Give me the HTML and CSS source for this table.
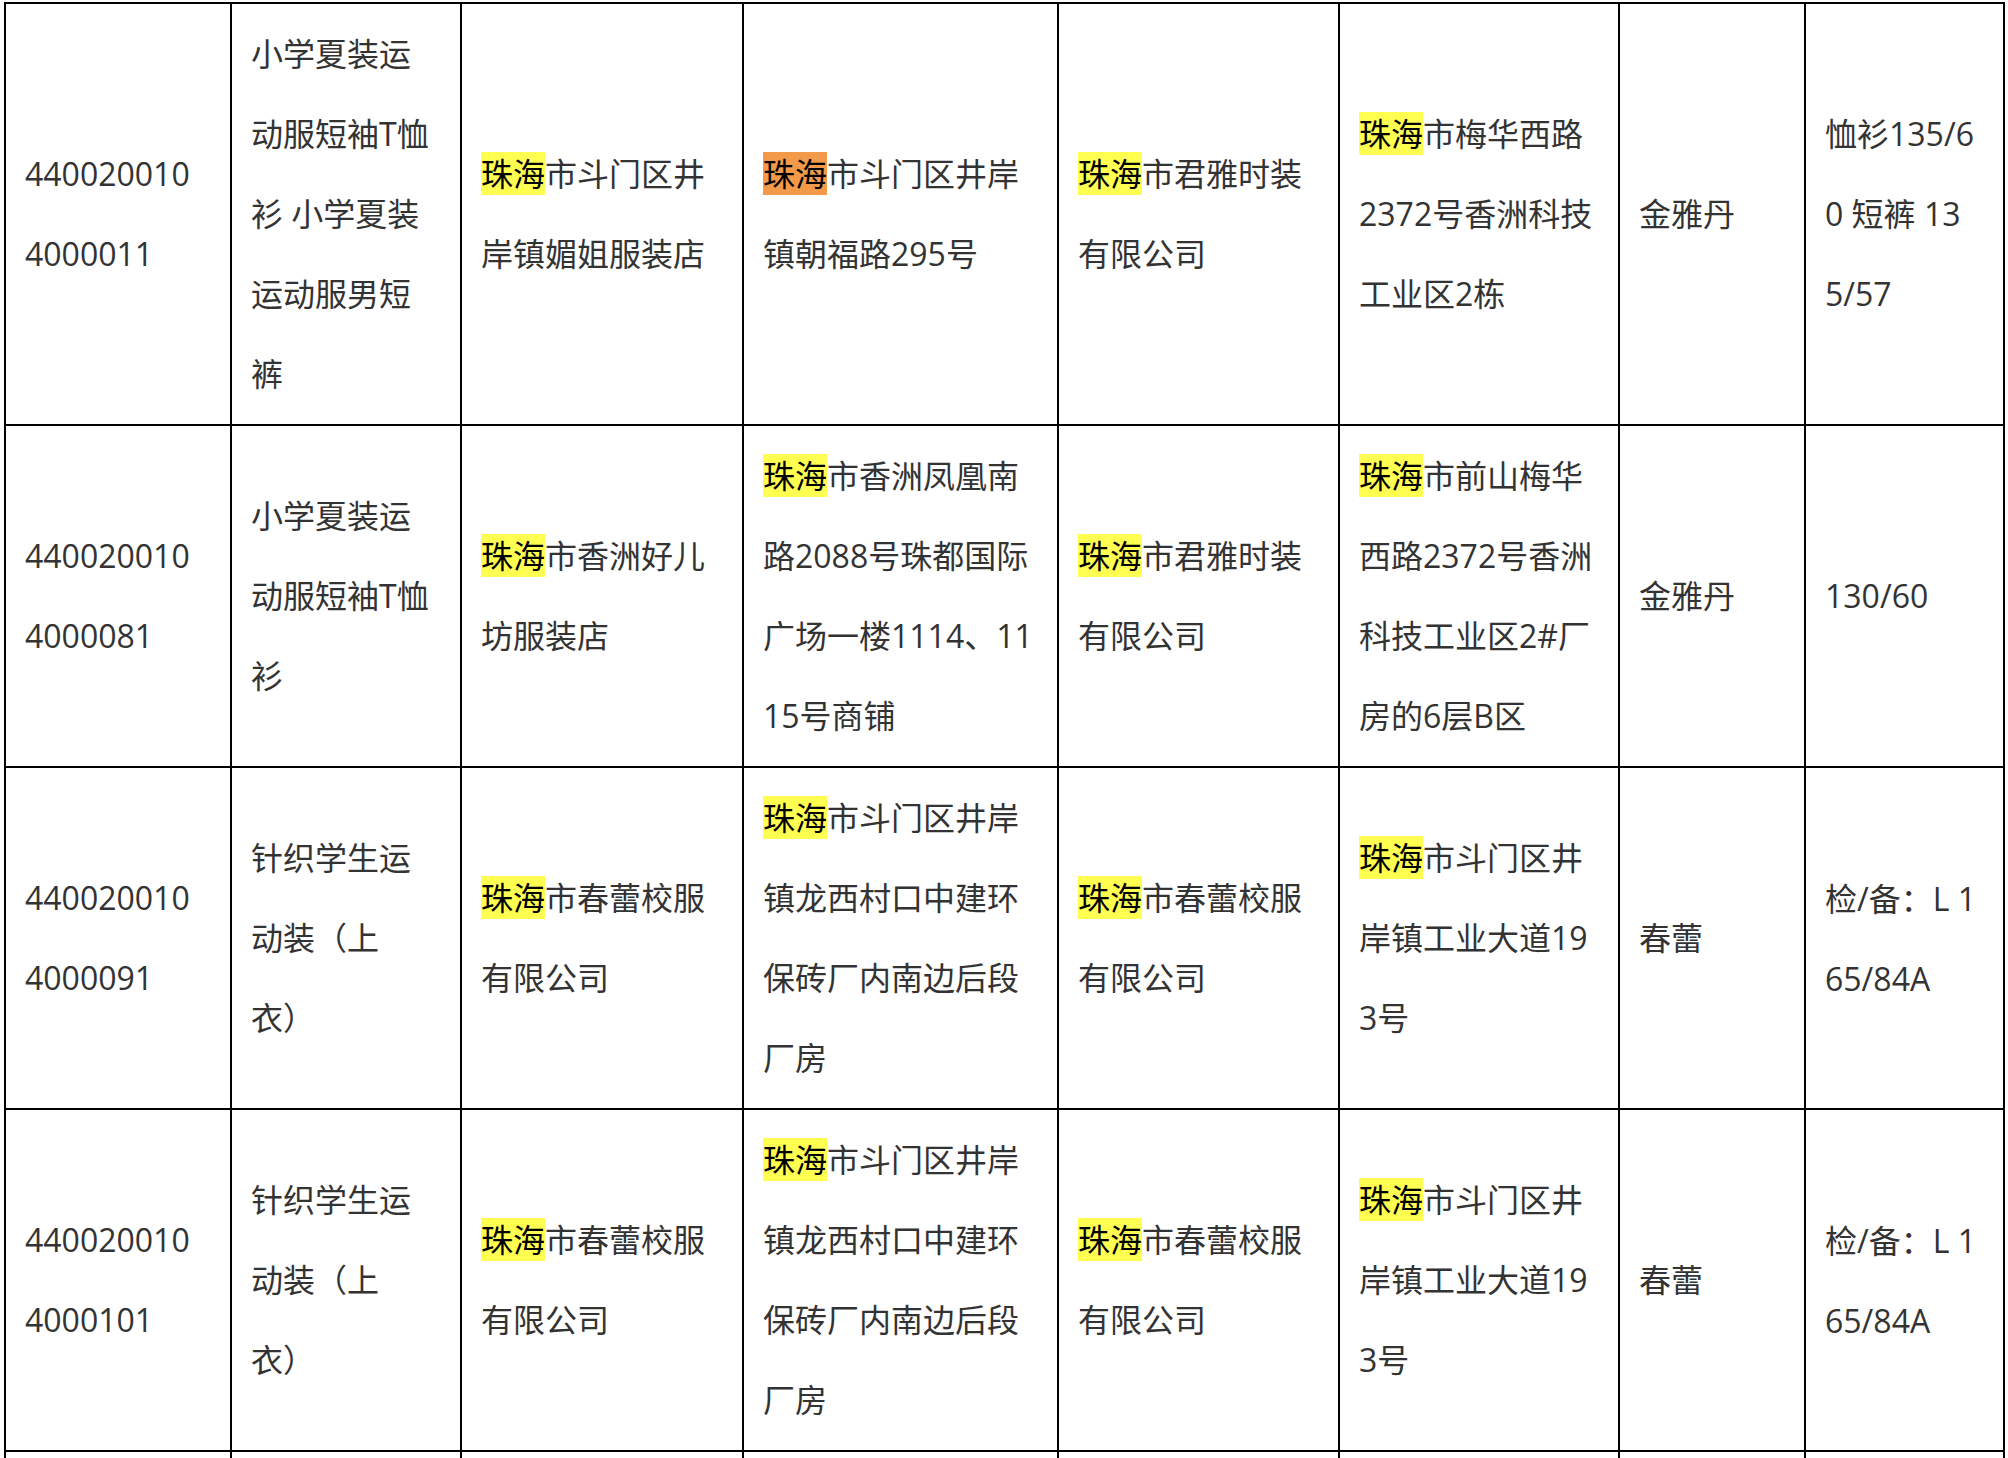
FILE: index.html
```html
<!DOCTYPE html>
<html lang="zh-CN">
<head>
<meta charset="utf-8">
<title>抽检结果</title>
<link rel="stylesheet" href="styles.css">
</head>
<body>
<table class="results">
  <tbody>
    <tr>
      <td class="c1">4400200104000011</td>
      <td class="c2">小学夏装运动服短袖T恤衫 小学夏装运动服男短裤</td>
      <td class="c3"><mark class="hl">珠海</mark>市斗门区井岸镇媚姐服装店</td>
      <td class="c4"><mark class="hl hl-current">珠海</mark>市斗门区井岸镇朝福路295号</td>
      <td class="c5"><mark class="hl">珠海</mark>市君雅时装有限公司</td>
      <td class="c6"><mark class="hl">珠海</mark>市梅华西路2372号香洲科技工业区2栋</td>
      <td class="c7">金雅丹</td>
      <td class="c8">恤衫135/60 短裤 135/57</td>
    </tr>
    <tr>
      <td class="c1">4400200104000081</td>
      <td class="c2">小学夏装运动服短袖T恤衫</td>
      <td class="c3"><mark class="hl">珠海</mark>市香洲好儿坊服装店</td>
      <td class="c4"><mark class="hl">珠海</mark>市香洲凤凰南路2088号珠都国际广场一楼1114、1115号商铺</td>
      <td class="c5"><mark class="hl">珠海</mark>市君雅时装有限公司</td>
      <td class="c6"><mark class="hl">珠海</mark>市前山梅华西路2372号香洲科技工业区2#厂房的6层B区</td>
      <td class="c7">金雅丹</td>
      <td class="c8">130/60</td>
    </tr>
    <tr>
      <td class="c1">4400200104000091</td>
      <td class="c2">针织学生运动装（上衣）</td>
      <td class="c3"><mark class="hl">珠海</mark>市春蕾校服有限公司</td>
      <td class="c4"><mark class="hl">珠海</mark>市斗门区井岸镇龙西村口中建环保砖厂内南边后段厂房</td>
      <td class="c5"><mark class="hl">珠海</mark>市春蕾校服有限公司</td>
      <td class="c6"><mark class="hl">珠海</mark>市斗门区井岸镇工业大道193号</td>
      <td class="c7">春蕾</td>
      <td class="c8">检/备<span class="punct">：</span>L 165/84A</td>
    </tr>
    <tr>
      <td class="c1">4400200104000101</td>
      <td class="c2">针织学生运动装（上衣）</td>
      <td class="c3"><mark class="hl">珠海</mark>市春蕾校服有限公司</td>
      <td class="c4"><mark class="hl">珠海</mark>市斗门区井岸镇龙西村口中建环保砖厂内南边后段厂房</td>
      <td class="c5"><mark class="hl">珠海</mark>市春蕾校服有限公司</td>
      <td class="c6"><mark class="hl">珠海</mark>市斗门区井岸镇工业大道193号</td>
      <td class="c7">春蕾</td>
      <td class="c8">检/备<span class="punct">：</span>L 165/84A</td>
    </tr>
    <tr class="row-next">
      <td class="c1"></td>
      <td class="c2"></td>
      <td class="c3"></td>
      <td class="c4"></td>
      <td class="c5"></td>
      <td class="c6"></td>
      <td class="c7"></td>
      <td class="c8"></td>
    </tr>
  </tbody>
</table>
</body>
</html>
```
FILE: styles.css
```css
html, body {
  margin: 0;
  padding: 0;
  background: #ffffff;
}

body {
  font-family: "Open Sans", "Noto Sans CJK SC", sans-serif;
  font-size: 32px;
  line-height: 80px;
  color: #333333;
  overflow: hidden;
}

.results {
  margin: 2px 0 0 4px;
  border-collapse: separate;
  border-spacing: 0;
  table-layout: fixed;
  width: 2001px;
  border-top: 2px solid #000;
  border-left: 2px solid #000;
}

.results td {
  box-sizing: border-box;
  border-right: 2px solid #000;
  border-bottom: 2px solid #000;
  padding: 10px 23px 10px 19px;
  vertical-align: middle;
  text-align: left;
  word-break: break-all;
  text-spacing-trim: space-all;
}

.results .c1 { width: 226px; }
.results .c2 { width: 230px; }
.results .c3 { width: 282px; }
.results .c4 { width: 315px; }
.results .c5 { width: 281px; }
.results .c6 { width: 280px; }
.results .c7 { width: 186px; }
.results .c8 { width: 199px; padding-right: 25px; }

.punct {
  font-family: "Noto Sans CJK TC", "Noto Sans CJK SC", sans-serif;
}

.row-next td {
  height: 342px;
}

.hl {
  background: #ffff52;
  color: #000000;
}

.hl-current {
  background: #f39a4a;
}
```
